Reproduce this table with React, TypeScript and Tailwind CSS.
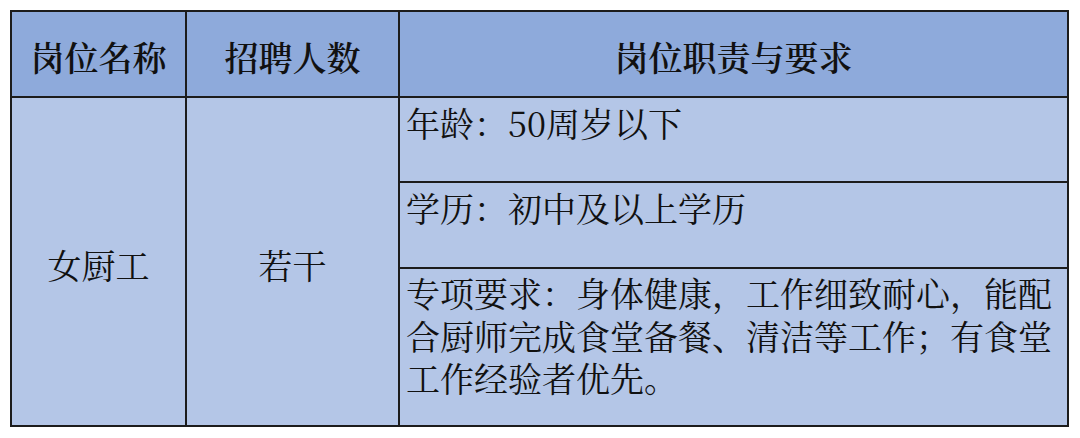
import React from "react";

const font = {
  fontFamily:
    '"SimSun", "Noto Serif CJK SC", "Noto Sans CJK SC", serif',
};

export default function App() {
  return (
    <div className="w-[1080px] h-[438px] bg-white pt-[10px] pl-[10px]" style={font}>
      <div className="grid w-[1059px] grid-cols-[173px_211px_667px] grid-rows-[84px_83px_84px_156px] gap-[2px] bg-[#1c1c1c] p-[2px] text-[34px] leading-[42.5px] text-[#111]">
        <div className="flex items-center justify-center bg-[#8eaadb] pt-[6px] font-semibold">
          岗位名称
        </div>
        <div className="flex items-center justify-center bg-[#8eaadb] pt-[6px] font-semibold">
          招聘人数
        </div>
        <div className="flex items-center justify-center bg-[#8eaadb] pt-[6px] font-semibold">
          岗位职责与要求
        </div>

        <div className="row-span-3 flex items-center justify-center bg-[#b4c6e7] pt-[7px]">
          女厨工
        </div>
        <div className="row-span-3 flex items-center justify-center bg-[#b4c6e7] pt-[7px]">
          若干
        </div>
        <div className="bg-[#b4c6e7] pl-[6px] pt-[4px]">年龄：50周岁以下</div>
        <div className="bg-[#b4c6e7] pl-[6px] pt-[4px]">学历：初中及以上学历</div>
        <div className="bg-[#b4c6e7] pl-[6px] pt-[3px]">
          <div>专项要求：身体健康，工作细致耐心，能配</div>
          <div>合厨师完成食堂备餐、清洁等工作；有食堂</div>
          <div>工作经验者优先。</div>
        </div>
      </div>
    </div>
  );
}
